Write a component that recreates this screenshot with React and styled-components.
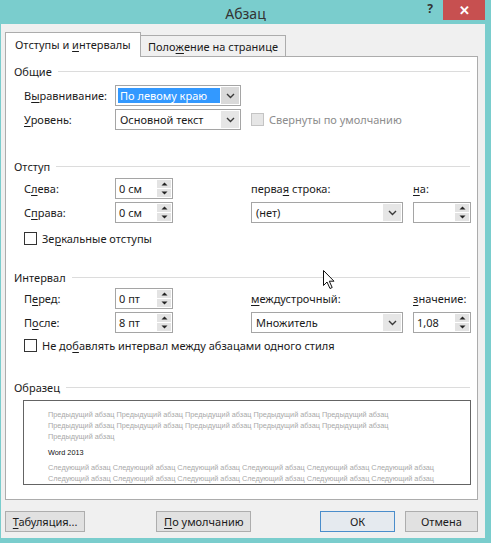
import React from "react";
import styled, { createGlobalStyle } from "styled-components";

const GlobalStyle = createGlobalStyle`
  html, body {
    margin: 0;
    padding: 0;
  }
  body {
    background: #7acdcd;
    font-family: "Noto Sans", "Segoe UI", sans-serif;
    font-size: 11px;
    color: #1b1b1b;
  }
`;

const Window = styled.div`
  position: relative;
  width: 491px;
  height: 543px;
  background: #7acdcd;
  display: flex;
  flex-direction: column;
  overflow: hidden;
`;

const TitleBar = styled.div`
  height: 25px;
  display: grid;
  grid-template-columns: 1fr auto 1fr;
`;

const Title = styled.div`
  padding-top: 4px;
  font-size: 14px;
  color: #333;
`;

const Controls = styled.div`
  display: flex;
  justify-content: flex-end;
  align-items: flex-start;
  padding-right: 6px;
`;

const HelpButton = styled.div`
  width: 26px;
  height: 20px;
  display: flex;
  align-items: center;
  justify-content: center;
  font-weight: bold;
  font-size: 12px;
  color: #333;
  padding-bottom: 3px;
  box-sizing: border-box;
`;

const CloseButton = styled.div`
  width: 42px;
  height: 20px;
  background: #c75050;
  color: #fff;
  display: flex;
  align-items: center;
  justify-content: center;
  font-size: 13px;
  font-weight: bold;
`;

const Body = styled.div`
  flex: 1;
  margin: 0 6px 5px 1px;
  background: #f0f0f0;
  padding: 8px 7px 6px 4px;
  display: flex;
  flex-direction: column;
`;

const Tabs = styled.div`
  display: flex;
  align-items: flex-end;
  height: 24px;
`;

const Tab = styled.div`
  position: relative;
  z-index: ${(p) => (p.$active ? 1 : 0)};
  box-sizing: border-box;
  width: ${(p) => p.$w}px;
  height: ${(p) => (p.$active ? 25 : 21)}px;
  margin-bottom: ${(p) => (p.$active ? -1 : 0)}px;
  margin-left: ${(p) => (p.$active ? 0 : -1)}px;
  padding: ${(p) => (p.$active ? "0 0 1px 9px" : "0 0 0 7px")};
  border: 1px solid #acacac;
  border-bottom: none;
  background: ${(p) => (p.$active ? "#fff" : "#f0f0f0")};
  display: flex;
  align-items: center;
  white-space: nowrap;
`;

const Panel = styled.div`
  height: 444px;
  box-sizing: border-box;
  border: 1px solid #acacac;
  background: #fff;
  padding: 6px 7px 0 8px;
  display: flex;
  flex-direction: column;
`;

const GroupTitle = styled.div`
  display: flex;
  align-items: center;
  gap: 6px;
  height: 16px;
  margin-top: ${(p) => p.$top || 0}px;
  &::after {
    content: "";
    flex: 1;
    height: 1px;
    background: #dcdcdc;
  }
`;

const FieldGrid = styled.div`
  display: grid;
  grid-template-columns: 81px 126px 152px 58px;
  grid-auto-rows: 21px;
  column-gap: 10px;
  row-gap: 3px;
  align-items: center;
  margin: ${(p) => p.$top}px 0 0 10px;
`;

const Label = styled.span`
  white-space: nowrap;
`;

const Key = styled.span`
  text-decoration: underline;
  text-underline-offset: 2px;
`;

const SelectBox = styled.div`
  box-sizing: border-box;
  width: ${(p) => p.$w}px;
  height: 21px;
  border: 1px solid #a5a5a5;
  background: #fff;
  display: flex;
`;

const SelectValue = styled.div`
  flex: 1;
  display: flex;
  align-items: center;
  padding-left: 4px;
  white-space: nowrap;
`;

const Highlight = styled.div`
  flex: 1;
  align-self: stretch;
  margin: 2px 0 2px -2px;
  padding-left: 2px;
  display: flex;
  align-items: center;
  background: #3399ff;
  color: #fff;
`;

const DropButton = styled.div`
  width: 18px;
  margin: 1px;
  background: ${(p) => (p.$focus ? "#d9d9d9" : "#e6e6e6")};
  display: flex;
  align-items: center;
  justify-content: center;
`;

const SpinBox = styled.div`
  box-sizing: border-box;
  width: 58px;
  height: 21px;
  border: 1px solid #a5a5a5;
  background: #fff;
  display: flex;
`;

const SpinValue = styled.div`
  flex: 1;
  display: flex;
  align-items: center;
  padding-left: 3px;
  white-space: nowrap;
`;

const SpinButtons = styled.div`
  width: 14px;
  padding: 1px;
  display: flex;
  flex-direction: column;
  gap: 1px;
`;

const SpinHalf = styled.div`
  flex: 1;
  background: #e3e3e3;
  display: flex;
  align-items: center;
  justify-content: center;
`;

const CheckRow = styled.label`
  display: flex;
  align-items: center;
  gap: 5px;
  height: 16px;
  margin: ${(p) => p.$top || 0}px 0 0 ${(p) => p.$left ?? 10}px;
  white-space: nowrap;
  color: ${(p) => (p.$disabled ? "#8d8d8d" : "inherit")};
`;

const CheckBox = styled.span`
  flex-shrink: 0;
  box-sizing: border-box;
  width: 13px;
  height: 13px;
  border: 1px solid ${(p) => (p.$disabled ? "#c4c4c4" : "#333")};
  background: ${(p) => (p.$disabled ? "#e6e6e6" : "#fff")};
`;

const Preview = styled.div`
  box-sizing: border-box;
  width: 448px;
  height: 85px;
  margin: 5px 0 0 9px;
  border: 1px solid #646464;
  padding: 8px 0 0 24px;
  overflow: hidden;
  font-family: "Liberation Sans", Arial, sans-serif;
  font-size: 7.3px;
  line-height: 11px;
`;

const PreviewLine = styled.div`
  white-space: nowrap;
  color: ${(p) => (p.$current ? "#111" : "#a9a9a9")};
  margin-top: ${(p) => p.$top || 0}px;
`;

const ButtonRow = styled.div`
  display: flex;
  margin-top: 11px;
`;

const Button = styled.button`
  box-sizing: border-box;
  width: ${(p) => p.$w}px;
  height: 21px;
  margin-left: ${(p) => p.$gap || 0}px;
  padding: 0;
  border: 1px solid ${(p) => (p.$primary ? "#4a8dcb" : "#adadad")};
  background: ${(p) => (p.$primary ? "#e5eaef" : "#e1e1e1")};
  font: inherit;
  color: #1b1b1b;
`;

const Pointer = styled.svg`
  position: absolute;
  left: 323px;
  top: 270px;
`;

const Chevron = () => (
  <svg width="9" height="6" viewBox="0 0 9 6">
    <path d="M1 1 L4.5 4.5 L8 1" fill="none" stroke="#3a3a3a" strokeWidth="1.4" />
  </svg>
);

const Arrow = ({ down }) => (
  <svg width="7" height="4" viewBox="0 0 7 4">
    <path d={down ? "M0.5 0.5 L6.5 0.5 L3.5 3.5 Z" : "M0.5 3.5 L6.5 3.5 L3.5 0.5 Z"} fill="#222" />
  </svg>
);

function Select({ width, value, focus }) {
  return (
    <SelectBox $w={width}>
      <SelectValue>{focus ? <Highlight>{value}</Highlight> : value}</SelectValue>
      <DropButton $focus={focus}>
        <Chevron />
      </DropButton>
    </SelectBox>
  );
}

function Spinner({ value }) {
  return (
    <SpinBox>
      <SpinValue>{value}</SpinValue>
      <SpinButtons>
        <SpinHalf>
          <Arrow />
        </SpinHalf>
        <SpinHalf>
          <Arrow down />
        </SpinHalf>
      </SpinButtons>
    </SpinBox>
  );
}

const prevLine = "Предыдущий абзац ";
const nextLine = "Следующий абзац ";

export default function App() {
  return (
    <>
      <GlobalStyle />
      <Window>
        <TitleBar>
          <div />
          <Title>Абзац</Title>
          <Controls>
            <HelpButton>?</HelpButton>
            <CloseButton>✕</CloseButton>
          </Controls>
        </TitleBar>

        <Body>
          <Tabs>
            <Tab $active $w={136}>
              Отступы и&nbsp;<Key>и</Key>нтервалы
            </Tab>
            <Tab $w={146}>
              Поло<Key>ж</Key>ение на странице
            </Tab>
          </Tabs>

          <Panel>
            <GroupTitle>Общие</GroupTitle>
            <FieldGrid $top={6}>
              <Label>
                В<Key>ы</Key>равнивание:
              </Label>
              <Select width={126} value="По левому краю" focus />
              <span />
              <span />
              <Label>
                <Key>У</Key>ровень:
              </Label>
              <Select width={126} value="Основной текст" />
              <CheckRow $left={0} $disabled>
                <CheckBox $disabled />
                Свернуты по умолчанию
              </CheckRow>
            </FieldGrid>

            <GroupTitle $top={28}>Отступ</GroupTitle>
            <FieldGrid $top={4}>
              <Label>
                С<Key>л</Key>ева:
              </Label>
              <Spinner value="0 см" />
              <Label>
                перва<Key>я</Key> строка:
              </Label>
              <Label>
                <Key>н</Key>а:
              </Label>
              <Label>
                С<Key>п</Key>рава:
              </Label>
              <Spinner value="0 см" />
              <Select width={152} value="(нет)" />
              <Spinner value="" />
            </FieldGrid>
            <CheckRow $top={7}>
              <CheckBox />
              <span>
                Зе<Key>р</Key>кальные отступы
              </span>
            </CheckRow>

            <GroupTitle $top={23}>Интервал</GroupTitle>
            <FieldGrid $top={3}>
              <Label>
                П<Key>е</Key>ред:
              </Label>
              <Spinner value="0 пт" />
              <Label>
                <Key>м</Key>еждустрочный:
              </Label>
              <Label>
                <Key>з</Key>начение:
              </Label>
              <Label>
                П<Key>о</Key>сле:
              </Label>
              <Spinner value="8 пт" />
              <Select width={152} value="Множитель" />
              <Spinner value="1,08" />
            </FieldGrid>
            <CheckRow $top={4}>
              <CheckBox />
              <span>
                Не до<Key>б</Key>авлять интервал между абзацами одного стиля
              </span>
            </CheckRow>

            <GroupTitle $top={26}>Образец</GroupTitle>
            <Preview>
              <PreviewLine>{prevLine.repeat(5)}</PreviewLine>
              <PreviewLine>{prevLine.repeat(5)}</PreviewLine>
              <PreviewLine>Предыдущий абзац</PreviewLine>
              <PreviewLine $current $top={5}>
                Word 2013
              </PreviewLine>
              <PreviewLine $top={4}>{nextLine.repeat(6)}</PreviewLine>
              <PreviewLine>{nextLine.repeat(6)}</PreviewLine>
            </Preview>
          </Panel>

          <ButtonRow>
            <Button $w={81}>
              <Key>Т</Key>абуляция...
            </Button>
            <Button $w={96} $gap={71}>
              <Key>П</Key>о умолчанию
            </Button>
            <Button $w={75} $gap={69} $primary>
              ОК
            </Button>
            <Button $w={74} $gap={10}>
              Отмена
            </Button>
          </ButtonRow>
        </Body>

        <Pointer width="14" height="20" viewBox="0 0 14 20">
          <path
            d="M0.5 0.5 L0.5 15.5 L4 12 L7 18.5 L9.2 17.5 L6.3 11.2 L11 11.2 Z"
            fill="#fff"
            stroke="#111"
            strokeWidth="1"
          />
        </Pointer>
      </Window>
    </>
  );
}
